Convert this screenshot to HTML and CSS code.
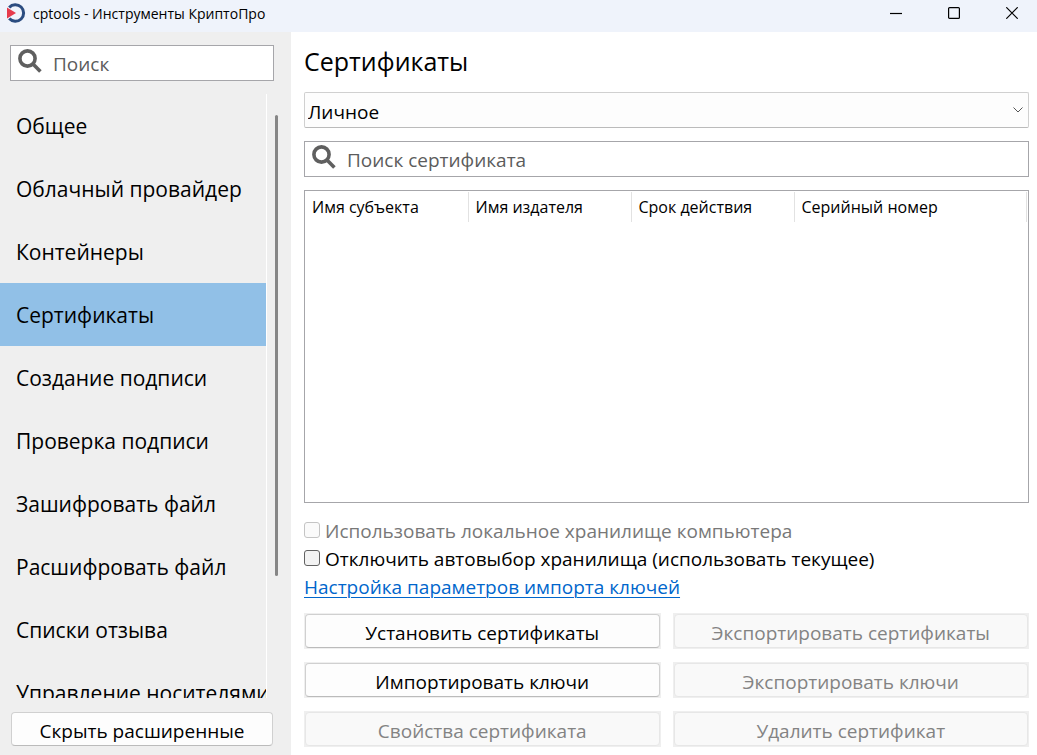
FILE: index.html
```html
<!DOCTYPE html>
<html lang="ru">
<head>
  <meta charset="UTF-8">
  <meta name="viewport" content="width=device-width, initial-scale=1.0">
  <title>cptools - Инструменты КриптоПро</title>
  <link rel="stylesheet" href="styles.css">
</head>
<body>
  <header class="titlebar">
    <svg class="logo" viewBox="0 0 20 20" width="20" height="20" aria-hidden="true">
      <path d="M3.2 4.4A8.3 8.3 0 1 1 3.2 15.6" fill="none" stroke="#2b4c80" stroke-width="3"/>
      <path d="M1 4.6L10 10L1 15.4Z" fill="#e63a4c"/>
    </svg>
    <span class="caption">cptools - Инструменты КриптоПро</span>
    <div class="window-buttons">
      <button type="button" aria-label="Свернуть"><svg viewBox="0 0 12 12" width="12" height="12"><path d="M0 6.5H12"/></svg></button>
      <button type="button" aria-label="Развернуть"><svg viewBox="0 0 12 12" width="12" height="12"><rect x="0.6" y="0.6" width="10.8" height="10.8" rx="1"/></svg></button>
      <button type="button" aria-label="Закрыть"><svg viewBox="0 0 12 12" width="12" height="12"><path d="M0.3 0.3L11.7 11.7M11.7 0.3L0.3 11.7"/></svg></button>
    </div>
  </header>

  <div class="window">
    <aside class="sidebar">
      <label class="search">
        <svg viewBox="0 0 24 24" width="24" height="24" aria-hidden="true"><circle cx="9.5" cy="9.5" r="7.6"/><path d="M15 15L22.4 22.4"/></svg>
        <input type="text" placeholder="Поиск" aria-label="Поиск">
      </label>
      <div class="menu-area">
        <nav class="menu">
          <a href="#">Общее</a>
          <a href="#">Облачный провайдер</a>
          <a href="#">Контейнеры</a>
          <a href="#" class="active">Сертификаты</a>
          <a href="#">Создание подписи</a>
          <a href="#">Проверка подписи</a>
          <a href="#">Зашифровать файл</a>
          <a href="#">Расшифровать файл</a>
          <a href="#">Списки отзыва</a>
          <a href="#">Управление носителями</a>
        </nav>
        <div class="scrollbar"><div class="thumb"></div></div>
      </div>
      <button type="button" class="btn toggle">Скрыть расширенные</button>
    </aside>

    <main class="content">
      <h1>Сертификаты</h1>
      <div class="store">
        <select aria-label="Хранилище">
          <option>Личное</option>
        </select>
        <svg viewBox="0 0 10 6" width="10" height="6" aria-hidden="true"><path d="M0.5 0.5L5 5L9.5 0.5"/></svg>
      </div>
      <label class="search">
        <svg viewBox="0 0 24 24" width="24" height="24" aria-hidden="true"><circle cx="9.5" cy="9.5" r="7.6"/><path d="M15 15L22.4 22.4"/></svg>
        <input type="text" placeholder="Поиск сертификата" aria-label="Поиск сертификата">
      </label>
      <div class="list">
        <table>
          <thead>
            <tr><th>Имя субъекта</th><th>Имя издателя</th><th>Срок действия</th><th>Серийный номер</th></tr>
          </thead>
          <tbody></tbody>
        </table>
      </div>
      <div class="options">
        <label class="disabled"><input type="checkbox" disabled>Использовать локальное хранилище компьютера</label>
        <label><input type="checkbox">Отключить автовыбор хранилища (использовать текущее)</label>
        <a href="#">Настройка параметров импорта ключей</a>
      </div>
      <div class="actions">
        <div class="cell"><button type="button" class="btn">Установить сертификаты</button></div>
        <div class="cell"><button type="button" class="btn" disabled>Экспортировать сертификаты</button></div>
        <div class="cell"><button type="button" class="btn">Импортировать ключи</button></div>
        <div class="cell"><button type="button" class="btn" disabled>Экспортировать ключи</button></div>
        <div class="cell"><button type="button" class="btn" disabled>Свойства сертификата</button></div>
        <div class="cell"><button type="button" class="btn" disabled>Удалить сертификат</button></div>
      </div>
    </main>
  </div>
</body>
</html>
```
FILE: styles.css
```css
* {
  box-sizing: border-box;
}
body {
  margin: 0;
  height: 100vh;
  display: flex;
  flex-direction: column;
  overflow: hidden;
  font-family: "Segoe UI", "Open Sans", "Noto Sans", sans-serif;
  font-size: 19px;
  color: #000;
  background: #fff;
}
button, input, select {
  font: inherit;
  color: inherit;
}

/* title bar */
.titlebar {
  display: flex;
  flex: none;
  height: 32px;
  padding-left: 6px;
  background: #eff3fb;
}
.logo {
  margin-top: 3px;
}
.caption {
  margin-left: 7px;
  font-size: 14px;
  line-height: 28px;
}
.window-buttons {
  display: flex;
  margin-left: auto;
  margin-right: -4px;
}
.window-buttons button {
  display: flex;
  justify-content: center;
  align-items: center;
  width: 58px;
  height: 26px;
  padding: 0;
  border: none;
  background: none;
}
.window-buttons svg {
  fill: none;
  stroke: #000;
  stroke-width: 1.2;
}

.window {
  display: flex;
  flex: 1;
  min-height: 0;
}

/* sidebar */
.sidebar {
  display: flex;
  flex-direction: column;
  flex: none;
  width: 291px;
  padding: 13px 0 9px;
  background: #efefef;
}
.sidebar .search {
  margin: 0 17px 0 10px;
}
.search {
  display: flex;
  flex: none;
  height: 36px;
  padding: 3px 7px;
  border: 1px solid #a6a6aa;
  background: #fff;
}
.search svg {
  flex: none;
  fill: none;
  stroke: #5f5f5f;
  stroke-width: 3.6;
}
.search input {
  flex: 1;
  min-width: 0;
  margin-left: 11px;
  padding: 2px 0 0;
  border: none;
  outline: none;
  background: none;
}
.search input::placeholder {
  color: #5c5c5c;
  opacity: 1;
}
.menu-area {
  display: flex;
  flex: 1;
  min-height: 0;
  margin: 13px 0;
}
.menu {
  width: 267px;
  overflow: hidden;
  border-right: 1px solid #fff;
}
.menu a {
  display: block;
  height: 63px;
  padding-left: 16px;
  font-size: 21px;
  line-height: 64px;
  color: #000;
  text-decoration: none;
  white-space: nowrap;
}
.menu .active {
  background: #91c0e7;
}
.scrollbar {
  padding: 21px 8px;
}
.thumb {
  width: 3px;
  height: 82%;
  border-radius: 2px;
  background: #868686;
}
.btn {
  height: 34px;
  padding: 3px 0 0;
  border: 1px solid #d0d0d0;
  border-bottom-color: #bbb;
  border-radius: 4px;
  background: #fdfdfd;
}
.btn:disabled {
  color: #838383;
  border-color: #e7e7e7;
  background: #f9f9f9;
}
.toggle {
  flex: none;
  margin: 1px 18px 0 11px;
}

/* certificates page */
.content {
  display: flex;
  flex-direction: column;
  flex: 1;
  min-width: 0;
  gap: 13px;
  padding: 13px 8px 8px 13px;
}
h1 {
  margin: 0 0 2px;
  font-size: 25px;
  font-weight: 400;
  line-height: 32px;
}
.store {
  display: grid;
  align-items: center;
}
.store select {
  grid-area: 1 / 1;
  height: 36px;
  padding: 3px 3px 0;
  border: 1px solid #d0d0d0;
  border-bottom-color: #bbb;
  border-radius: 2px;
  background: #fdfdfd;
  appearance: none;
}
.store svg {
  grid-area: 1 / 1;
  justify-self: end;
  margin-right: 6px;
  fill: none;
  stroke: #555;
  pointer-events: none;
}
.list {
  flex: 1;
  min-height: 0;
  padding: 1px 1px 1px 0;
  border: 1px solid #a6a6aa;
}
table {
  width: 100%;
  table-layout: fixed;
  border-collapse: collapse;
}
th {
  width: 163px;
  height: 30px;
  padding: 0 0 0 7px;
  border-right: 1px solid #e2e2e2;
  font-size: 16px;
  font-weight: 400;
  text-align: left;
}
th:last-child {
  width: auto;
}
.options label {
  display: flex;
  height: 28px;
  line-height: 30px;
}
.options .disabled {
  color: #787878;
}
.options input {
  appearance: none;
  width: 16px;
  height: 16px;
  margin: 6px 5px 0 0;
  border: 1px solid #626262;
  border-radius: 3px;
  background: #f3f3f3;
}
.options input:checked {
  background: #0067c0;
}
.options input:disabled {
  border-color: #c4c4c4;
  background: #fafafa;
}
.options a {
  display: block;
  width: fit-content;
  height: 28px;
  line-height: 30px;
  color: #0066cc;
  text-underline-offset: 3px;
  text-decoration-thickness: 1px;
}
.actions {
  display: grid;
  grid-template-columns: 1fr 1fr;
  gap: 13px 12px;
}
.cell {
  display: grid;
  padding: 1px;
  background: #efefef;
}
```
